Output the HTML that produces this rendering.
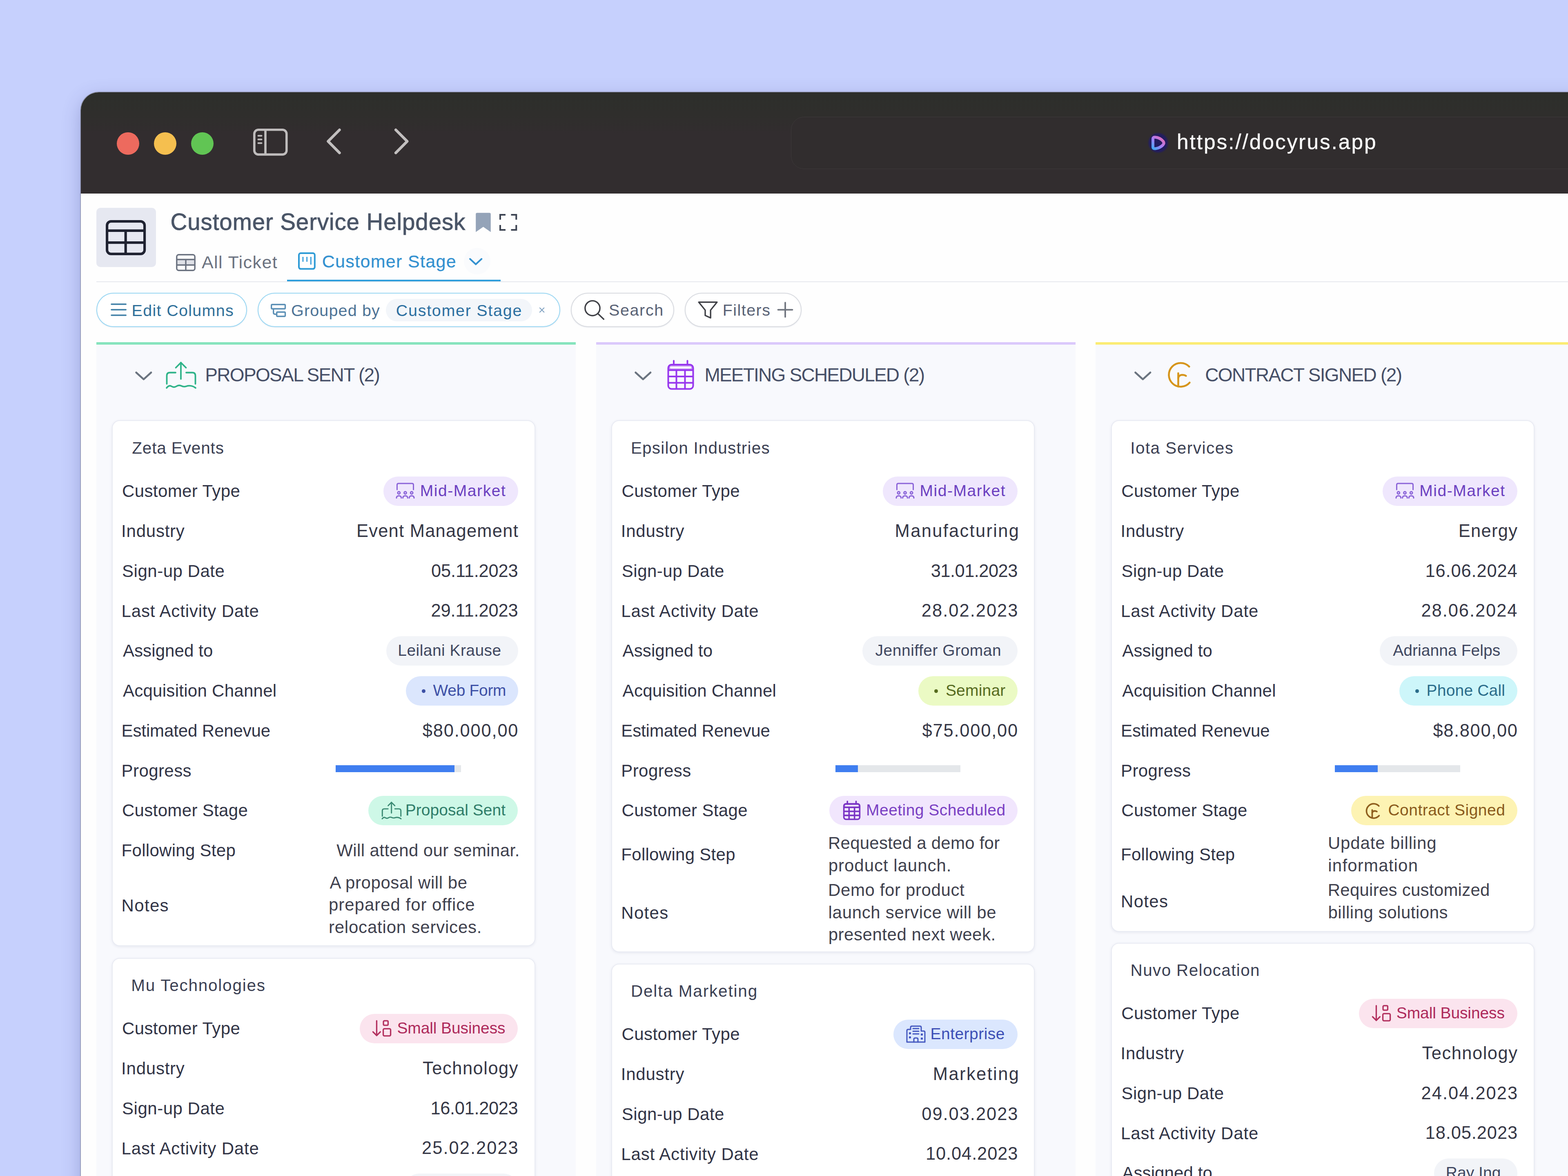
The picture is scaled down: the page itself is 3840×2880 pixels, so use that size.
<!DOCTYPE html>
<html lang="en"><head><meta charset="utf-8"><title>Customer Service Helpdesk</title>
<style>
html,body{margin:0;padding:0}
body{width:3840px;height:2880px;overflow:hidden;position:relative;background:#c6d0fd;font-family:"Liberation Sans", sans-serif}
#win{position:absolute;left:197.5px;top:226.3px;width:3800px;height:2800px;border-radius:44px 0 0 0;overflow:hidden;background:#fefefe;box-shadow:0 0 0 1.5px rgba(125,128,148,.7),0 14px 46px 0 rgba(60,64,140,.30)}
#pg{position:absolute;left:-197.5px;top:-226.3px;width:3840px;height:2880px}
#pg>div,#pg>svg,#pg>span{position:absolute}
#pg>span{white-space:pre;line-height:1;display:block}
</style></head><body><div id="win"><div id="pg">
<div style="left:197.5px;top:226.3px;width:3700px;height:247.7px;background:linear-gradient(180deg,#2d2f2b 0%,#2f2e2c 22%,#322d2f 42%,#322d2f 100%)"></div>
<div style="left:286.1px;top:323.5px;width:55.0px;height:55.0px;border-radius:50%;background:#ed6a5e"></div>
<div style="left:377.3px;top:323.5px;width:55.0px;height:55.0px;border-radius:50%;background:#f5bf4f"></div>
<div style="left:467.8px;top:323.5px;width:55.0px;height:55.0px;border-radius:50%;background:#61c554"></div>
<svg style="left:613.8px;top:308.9px" width="96.6" height="78.2" viewBox="613.8 308.9 96.6 78.2" fill="none"><g stroke="#bfbcbc" stroke-linecap="round"><rect x="622.6" y="317.7" width="79" height="60.6" rx="10" stroke-width="5.6"/><path d="M649.8 318 V378" stroke-width="5.6"/><path d="M632.3 332.3 H640.3 M632.3 341.4 H640.3 M632.3 350.5 H640.3" stroke-width="4"/></g></svg>
<svg style="left:793.0px;top:308.0px" width="49.0" height="76.0" viewBox="793.0 308.0 49.0 76.0" fill="none"><path d="M831.5 318 L803.5 346.1 L831.5 374.3" stroke="#c2bfbf" stroke-width="6.6" stroke-linecap="round" stroke-linejoin="round"/></svg>
<svg style="left:958.0px;top:308.0px" width="50.0" height="76.0" viewBox="958.0 308.0 50.0 76.0" fill="none"><path d="M969.2 318 L997.2 346.1 L969.2 374.3" stroke="#c2bfbf" stroke-width="6.6" stroke-linecap="round" stroke-linejoin="round"/></svg>
<div style="left:1937.0px;top:285.5px;width:2100.0px;height:128.0px;border-radius:32px;border:1.5px solid #3d393a;background:#312d2e;box-sizing:border-box"></div>
<svg style="left:2806px;top:320px" width="60" height="60" viewBox="2806 320 60 60" fill="none"><defs><linearGradient id="fg" x1="2852" y1="332" x2="2820" y2="368" gradientUnits="userSpaceOnUse"><stop offset="0" stop-color="#ff6a96"/><stop offset="0.5" stop-color="#a97cf5"/><stop offset="1" stop-color="#25b4f2"/></linearGradient><radialGradient id="fh" cx="2836.5" cy="349.8" r="26.5" gradientUnits="userSpaceOnUse"><stop offset="0" stop-color="#221c60"/><stop offset="0.78" stop-color="#221c60"/><stop offset="1" stop-color="#221c60" stop-opacity="0"/></radialGradient></defs><circle cx="2836.5" cy="349.8" r="26.5" fill="url(#fh)"/><path d="M2823.5 340 Q2823.5 335.5 2829 336 Q2841 337 2848.5 346 Q2852 350.5 2848 355 Q2841 362.5 2829.5 364 Q2823.5 364.5 2823.5 359.5 Z" stroke="url(#fg)" stroke-width="7" stroke-linejoin="round"/></svg>
<div style="left:235.7px;top:509.0px;width:146.3px;height:145.4px;border-radius:10px;background:#e6e8f1"></div>
<svg style="left:253.3px;top:532.8px" width="110.2" height="98.0" viewBox="253.3 532.8 110.2 98.0" fill="none"><g stroke="#1f2231" stroke-width="6.2" stroke-linejoin="round"><rect x="262.4" y="541.9" width="92" height="79.8" rx="10"/><path d="M262.4 564.6 H354.4 M262.4 594 H354.4 M308 564.6 V621.5"/></g></svg>
<svg style="left:1163.0px;top:519.0px" width="41.0" height="51.5" viewBox="1163.0 519.0 41.0 51.5" fill="none"><path d="M1165.2 524.5 Q1165.2 521.2 1168.5 521.2 H1198.5 Q1201.8 521.2 1201.8 524.5 V568.3 L1183.5 555.5 L1165.2 568.3 Z" fill="#94a3b8"/></svg>
<svg style="left:1220.0px;top:521.0px" width="49.3" height="47.0" viewBox="1220.0 521.0 49.3 47.0" fill="none"><g stroke="#3f4654" stroke-width="4" stroke-linecap="square" stroke-linejoin="miter"><path d="M1225 536 V526 H1236"/><path d="M1253.5 526 H1264.3 V536"/><path d="M1225 553 V563 H1236"/><path d="M1253.5 563 H1264.3 V553"/></g></svg>
<svg style="left:428.0px;top:618.5px" width="54.0" height="48.1" viewBox="428.0 618.5 54.0 48.1" fill="none"><g stroke="#6b7280" stroke-width="3.4" stroke-linejoin="round"><rect x="433" y="636" width="44" height="12" fill="#dfe1e7" stroke="none"/><rect x="432.8" y="623.3" width="44.4" height="38.5" rx="5"/><path d="M432.8 635 H477.2 M432.8 648.5 H477.2 M455 635 V661.5"/></g></svg>
<svg style="left:727.4px;top:615.0px" width="48.8" height="48.7" viewBox="727.4 615.0 48.8 48.7" fill="none"><g stroke="#2e9bd6" stroke-linejoin="round" stroke-linecap="butt"><rect x="732.4" y="620" width="38.8" height="38.6" rx="4.5" stroke-width="4"/><path d="M742.3 629 V641 M752 629 V641 M761.7 629 V648" stroke-width="3.4" stroke="#4fa9df"/></g></svg>
<div style="left:1136.0px;top:607.0px;width:65.0px;height:65.0px;border-radius:50%;background:#fafbfd"></div>
<svg style="left:1143.0px;top:625.5px" width="44.4" height="29.1" viewBox="1143.0 625.5 44.4 29.1" fill="none"><path d="M1151 633.5 L1165.2 646.8 L1179.4 633.5" stroke="#3391d0" stroke-width="4" stroke-linecap="round" stroke-linejoin="round"/></svg>
<div style="left:236.0px;top:689.0px;width:3650.0px;height:2.2px;background:#e6e8ee"></div>
<div style="left:703.3px;top:685.0px;width:523.0px;height:4.2px;background:#2f9edb"></div>
<div style="left:235.7px;top:717.0px;width:369.3px;height:84.0px;border-radius:42px;border:2.6px solid #9ad7f3;background:#fff;box-sizing:border-box;box-shadow:0 1px 3px rgba(120,140,170,.18)"></div>
<svg style="left:265.5px;top:737.0px" width="49.2" height="43.0" viewBox="265.5 737.0 49.2 43.0" fill="none"><path d="M272.5 745 H307.7 M272.5 758.5 H307.7 M272.5 772 H307.7" stroke="#3f7fa6" stroke-width="3.6" stroke-linecap="round"/></svg>
<div style="left:630.7px;top:717.0px;width:741.3px;height:84.0px;border-radius:42px;border:2.6px solid #9ad7f3;background:#fff;box-sizing:border-box;box-shadow:0 1px 3px rgba(120,140,170,.18)"></div>
<svg style="left:657.3px;top:737.5px" width="49.2" height="44.5" viewBox="657.3 737.5 49.2 44.5" fill="none"><g stroke="#5b8fb5" stroke-width="3.4" stroke-linejoin="round" stroke-linecap="round"><rect x="665" y="745.2" width="33.8" height="10.5" rx="2"/><rect x="678" y="763.8" width="20.8" height="10.5" rx="2"/><path d="M670 756 V765 Q670 769 674 769 H678"/></g></svg>
<div style="left:945.4px;top:731.6px;width:358.0px;height:55.4px;border-radius:28px;background:#f3f6fa"></div>
<svg style="left:1316.7px;top:748.5px" width="20.3" height="20.5" viewBox="1316.7 748.5 20.3 20.5" fill="none"><path d="M1321.7 753.6 L1332 763.9 M1332 753.6 L1321.7 763.9" stroke="#7fa1c1" stroke-width="2.1" stroke-linecap="round"/></svg>
<div style="left:1398.2px;top:717.0px;width:253.1px;height:84.0px;border-radius:42px;border:2.6px solid #d9dbe0;background:#fff;box-sizing:border-box;box-shadow:0 1px 3px rgba(120,140,170,.18)"></div>
<svg style="left:1425.0px;top:728.8px" width="61.0" height="60.2" viewBox="1425.0 728.8 61.0 60.2" fill="none"><g stroke="#3f4046" stroke-width="3.4" stroke-linecap="round"><circle cx="1451" cy="754.6" r="18.2"/><path d="M1464.5 768 L1478.5 781.5"/></g></svg>
<div style="left:1676.5px;top:717.0px;width:286.5px;height:84.0px;border-radius:42px;border:2.6px solid #d9dbe0;background:#fff;box-sizing:border-box;box-shadow:0 1px 3px rgba(120,140,170,.18)"></div>
<svg style="left:1703.3px;top:732.0px" width="61.1" height="54.5" viewBox="1703.3 732.0 61.1 54.5" fill="none"><path d="M1711.5 740 H1756.3 L1740.5 759.5 V778.5 L1727.3 772.5 V759.5 Z" stroke="#3f4046" stroke-width="3.4" stroke-linejoin="round"/></svg>
<svg style="left:1898.0px;top:734.4px" width="50.0" height="49.0" viewBox="1898.0 734.4 50.0 49.0" fill="none"><path d="M1923 741.5 V776.5 M1905.5 759 H1940.5" stroke="#70757f" stroke-width="3.8" stroke-linecap="round"/></svg>
<div style="left:236.0px;top:838.0px;width:1174.0px;height:2100.0px;background:#f8f9fd"></div>
<div style="left:236.0px;top:838.0px;width:1174.0px;height:6.4px;background:#86e4bd"></div>
<svg style="left:325.0px;top:903.7px" width="53.6" height="33.3" viewBox="325.0 903.7 53.6 33.3" fill="none"><path d="M333.5 912 L351.8 928.6 L370.1 912" stroke="#6b7480" stroke-width="4.6" stroke-linecap="round" stroke-linejoin="round"/></svg>
<svg style="left:404.5px;top:884.5px;overflow:visible" width="77.0" height="69.0" viewBox="0 0 77 69" fill="none"><g stroke="#2fb389" stroke-width="3.8" stroke-linecap="round" stroke-linejoin="round"><path d="M38 3 V43"/><path d="M25.5 15.5 L38 3 L50.5 15.5"/><path d="M25 27.5 H11 Q3.5 27.5 3.5 35 V55"/><path d="M51 27.5 H66 Q73.5 27.5 73.5 35 V55"/><path d="M3 65 Q9 57 15 61 T27 61 T39 60 T51 61 T63 60 T74 65" /></g></svg>
<div style="left:273.5px;top:1029.0px;width:1037.0px;height:1288.1px;border-radius:19px;background:#fff;border:2px solid #e9ebf3;box-sizing:border-box;box-shadow:0 2px 6px rgba(90,100,140,.11)"></div>
<div style="left:822.0px;top:1873.6px;width:306.6px;height:17.0px;background:#e4e7ea"></div>
<div style="left:822.0px;top:1873.6px;width:291.3px;height:17.0px;background:#3f7ef0"></div>
<div style="left:273.5px;top:2346.0px;width:1037.0px;height:1355.5px;border-radius:19px;background:#fff;border:2px solid #e9ebf3;box-sizing:border-box;box-shadow:0 2px 6px rgba(90,100,140,.11)"></div>
<div style="left:1459.7px;top:838.0px;width:1174.0px;height:2100.0px;background:#f8f9fd"></div>
<div style="left:1459.7px;top:838.0px;width:1174.0px;height:6.4px;background:#dbc9fb"></div>
<svg style="left:1548.0px;top:903.7px" width="53.6" height="33.3" viewBox="1548.0 903.7 53.6 33.3" fill="none"><path d="M1556.5 912 L1574.8 928.6 L1593.1 912" stroke="#6b7480" stroke-width="4.6" stroke-linecap="round" stroke-linejoin="round"/></svg>
<svg style="left:1633.7px;top:880.6px;overflow:visible" width="66.0" height="74.0" viewBox="0 0 66 74" fill="none"><g stroke="#9737ee" stroke-width="4.0" stroke-linecap="round" stroke-linejoin="round"><rect x="2.5" y="12" width="61" height="59.5" rx="8"/><path d="M16 2.5 V12 M49.5 2.5 V12"/><path d="M3 25.5 H63 M3 41 H63 M3 56.5 H63"/><path d="M22.5 26 V71 M43.5 26 V71"/></g><rect x="2.5" y="12" width="61" height="13.5" rx="6" fill="#9737ee" opacity="0.55"/><rect x="7" y="16.5" width="52" height="5" rx="2" fill="#fff" opacity="0.9"/></svg>
<div style="left:1497.2px;top:1029.0px;width:1037.0px;height:1303.1px;border-radius:19px;background:#fff;border:2px solid #e9ebf3;box-sizing:border-box;box-shadow:0 2px 6px rgba(90,100,140,.11)"></div>
<div style="left:2045.7px;top:1873.6px;width:306.6px;height:17.0px;background:#e4e7ea"></div>
<div style="left:2045.7px;top:1873.6px;width:55.2px;height:17.0px;background:#3f7ef0"></div>
<div style="left:1497.2px;top:2360.0px;width:1037.0px;height:1341.5px;border-radius:19px;background:#fff;border:2px solid #e9ebf3;box-sizing:border-box;box-shadow:0 2px 6px rgba(90,100,140,.11)"></div>
<div style="left:2683.4px;top:838.0px;width:1174.0px;height:2100.0px;background:#f8f9fd"></div>
<div style="left:2683.4px;top:838.0px;width:1174.0px;height:6.4px;background:#fbec74"></div>
<svg style="left:2772.0px;top:903.7px" width="53.6" height="33.3" viewBox="2772.0 903.7 53.6 33.3" fill="none"><path d="M2780.5 912 L2798.8 928.6 L2817.1 912" stroke="#6b7480" stroke-width="4.6" stroke-linecap="round" stroke-linejoin="round"/></svg>
<svg style="left:2860.0px;top:884.9px;overflow:visible" width="62.0" height="66.0" viewBox="0 0 62 66" fill="none"><g stroke="#d6951b" stroke-width="4.6" stroke-linecap="round" stroke-linejoin="round"><path d="M52.4 12.9 A29.0 29.0 0 1 0 53.4 52.0"/><path d="M25.5 29 V61.5"/><path d="M25.5 41 Q27 33.5 35 33 Q41 33 44.5 35.5"/></g></svg>
<div style="left:2720.9px;top:1029.0px;width:1037.0px;height:1253.0px;border-radius:19px;background:#fff;border:2px solid #e9ebf3;box-sizing:border-box;box-shadow:0 2px 6px rgba(90,100,140,.11)"></div>
<div style="left:3269.4px;top:1873.6px;width:306.6px;height:17.0px;background:#e4e7ea"></div>
<div style="left:3269.4px;top:1873.6px;width:104.2px;height:17.0px;background:#3f7ef0"></div>
<div style="left:2720.9px;top:2309.0px;width:1037.0px;height:1392.5px;border-radius:19px;background:#fff;border:2px solid #e9ebf3;box-sizing:border-box;box-shadow:0 2px 6px rgba(90,100,140,.11)"></div>
<span id="t0" style="left:2881.9px;top:322.2px;font-size:51.5px;color:#fbfbfb;letter-spacing:2.922px;-webkit-text-stroke:0.4px #fbfbfb;">https://docyrus.app</span>
<span id="t1" style="left:417.6px;top:516.0px;font-size:56.5px;color:#4a5567;letter-spacing:0.897px;-webkit-text-stroke:0.9px #4a5567;">Customer Service Helpdesk</span>
<span id="t2" style="left:493.9px;top:620.9px;font-size:43px;color:#6b7280;letter-spacing:1.417px;">All Ticket</span>
<span id="t3" style="left:788.7px;top:618.7px;font-size:43px;color:#3391d0;letter-spacing:1.338px;-webkit-text-stroke:0.3px #3391d0;">Customer Stage</span>
<span id="t4" style="left:322.6px;top:740.6px;font-size:39.5px;color:#2f6f99;letter-spacing:1.306px;">Edit Columns</span>
<span id="t5" style="left:713.0px;top:740.6px;font-size:39.5px;color:#4d7396;letter-spacing:1.160px;">Grouped by</span>
<span id="t6" style="left:969.8px;top:740.6px;font-size:39.5px;color:#2c6fa0;letter-spacing:1.703px;">Customer Stage</span>
<span id="t7" style="left:1490.9px;top:739.8px;font-size:39.5px;color:#596275;letter-spacing:1.641px;">Search</span>
<span id="t8" style="left:1769.8px;top:739.8px;font-size:39.5px;color:#596275;letter-spacing:1.439px;">Filters</span>
<span id="t9" style="left:502.2px;top:895.1px;font-size:46px;color:#464f67;letter-spacing:-1.649px;">PROPOSAL SENT (2)</span>
<span id="t10" style="left:323.2px;top:1076.7px;font-size:40.5px;color:#3b4053;letter-spacing:0.864px;">Zeta Events</span>
<span id="t11" style="left:298.9px;top:1182.4px;font-size:42px;color:#313446;letter-spacing:0.415px;">Customer Type</span>
<div style="left:938.5px;top:1167.2px;width:330.0px;height:72px;border-radius:36px;background:#efe7fd"></div>
<svg style="left:970.1px;top:1181.8px;overflow:visible" width="45.0" height="39.2" viewBox="0 0 46 40" fill="none"><g stroke="#8a63d8" stroke-width="3.0" stroke-linecap="round" stroke-linejoin="round"><path d="M2.5 17.5 V5.5 Q2.5 2 6 2 H40 Q43.5 2 43.5 5.5 V17.5"/><circle cx="7" cy="25.5" r="3"/><circle cx="23" cy="25.5" r="3"/><circle cx="39" cy="25.5" r="3"/><path d="M1 38.5 Q1 33 7 33 Q13 33 13 38.5"/><path d="M17 38.5 Q17 33 23 33 Q29 33 29 38.5"/><path d="M33 38.5 Q33 33 39 33 Q45 33 45 38.5"/></g></svg>
<span id="t12" style="left:1028.8px;top:1182.2px;font-size:39px;color:#6b3fc0;letter-spacing:1.550px;">Mid-Market</span>
<span id="t13" style="left:297.1px;top:1280.2px;font-size:42px;color:#313446;letter-spacing:0.765px;">Industry</span>
<span id="t14" style="left:872.9px;top:1278.9px;font-size:43.5px;color:#353746;letter-spacing:1.244px;">Event Management</span>
<span id="t15" style="left:299.1px;top:1377.9px;font-size:42px;color:#313446;letter-spacing:0.502px;">Sign-up Date</span>
<span id="t16" style="left:1056.0px;top:1376.7px;font-size:43.5px;color:#353746;letter-spacing:-0.186px;">05.11.2023</span>
<span id="t17" style="left:297.6px;top:1475.7px;font-size:42px;color:#313446;letter-spacing:0.834px;">Last Activity Date</span>
<span id="t18" style="left:1055.5px;top:1474.4px;font-size:43.5px;color:#353746;letter-spacing:-0.132px;">29.11.2023</span>
<span id="t19" style="left:300.9px;top:1573.4px;font-size:42px;color:#313446;letter-spacing:0.106px;">Assigned to</span>
<div style="left:945.5px;top:1558.2px;width:323.0px;height:72px;border-radius:36px;background:#f2f4f8"></div>
<span id="t20" style="left:974.3px;top:1573.2px;font-size:39px;color:#3f4760;letter-spacing:0.443px;">Leilani Krause</span>
<span id="t21" style="left:300.9px;top:1671.2px;font-size:42px;color:#313446;letter-spacing:0.281px;">Acquisition Channel</span>
<div style="left:994.0px;top:1656.0px;width:274.5px;height:72px;border-radius:36px;background:#dbe6fd"></div>
<div style="left:1032.5px;top:1687.5px;width:9.6px;height:9.6px;border-radius:50%;background:#3d50a6"></div>
<span id="t22" style="left:1060.5px;top:1670.9px;font-size:39px;color:#3d50a6;letter-spacing:-0.324px;">Web Form</span>
<span id="t23" style="left:297.6px;top:1768.9px;font-size:42px;color:#313446;letter-spacing:-0.121px;">Estimated Renevue</span>
<span id="t24" style="left:1034.8px;top:1767.7px;font-size:43.5px;color:#353746;letter-spacing:1.783px;">$80.000,00</span>
<span id="t25" style="left:297.6px;top:1866.7px;font-size:42px;color:#313446;letter-spacing:0.414px;">Progress</span>
<span id="t26" style="left:298.9px;top:1964.4px;font-size:42px;color:#313446;letter-spacing:0.347px;">Customer Stage</span>
<div style="left:902.4px;top:1949.2px;width:366.1px;height:72px;border-radius:36px;background:#cef8e7"></div>
<svg style="left:933.8px;top:1962.8px;overflow:visible" width="50.0" height="44.8" viewBox="0 0 77 69" fill="none"><g stroke="#3b8a73" stroke-width="4.5" stroke-linecap="round" stroke-linejoin="round"><path d="M38 3 V43"/><path d="M25.5 15.5 L38 3 L50.5 15.5"/><path d="M25 27.5 H11 Q3.5 27.5 3.5 35 V55"/><path d="M51 27.5 H66 Q73.5 27.5 73.5 35 V55"/><path d="M3 65 Q9 57 15 61 T27 61 T39 60 T51 61 T63 60 T74 65" /></g></svg>
<span id="t27" style="left:992.7px;top:1964.2px;font-size:39px;color:#2f7d69;letter-spacing:0.040px;">Proposal Sent</span>
<span id="t28" style="left:297.6px;top:2062.4px;font-size:42px;color:#313446;letter-spacing:0.287px;">Following Step</span>
<span id="t29" style="left:824.3px;top:2062.1px;font-size:42px;color:#3f414e;letter-spacing:0.398px;">Will attend our seminar.</span>
<span id="t30" style="left:297.6px;top:2196.5px;font-size:42px;color:#313446;letter-spacing:1.311px;">Notes</span>
<span id="t31" style="left:807.6px;top:2140.5px;font-size:42px;color:#3f414e;letter-spacing:0.570px;">A proposal will be</span>
<span id="t32" style="left:805.0px;top:2195.2px;font-size:42px;color:#3f414e;letter-spacing:0.970px;">prepared for office</span>
<span id="t33" style="left:804.9px;top:2249.9px;font-size:42px;color:#3f414e;letter-spacing:0.797px;">relocation services.</span>
<span id="t34" style="left:321.2px;top:2392.5px;font-size:40.5px;color:#3b4053;letter-spacing:1.756px;">Mu Technologies</span>
<span id="t35" style="left:298.9px;top:2498.2px;font-size:42px;color:#313446;letter-spacing:0.415px;">Customer Type</span>
<div style="left:880.7px;top:2483.0px;width:387.8px;height:72px;border-radius:36px;background:#fbe4ee"></div>
<svg style="left:912.3px;top:2498.4px;overflow:visible" width="46.5" height="39.9" viewBox="0 0 49 42" fill="none"><g stroke="#b3315f" stroke-width="3.5" stroke-linecap="round" stroke-linejoin="round"><path d="M11 2 V40 M1.5 30.5 L11 40 L20.5 30.5"/><rect x="28.5" y="2" width="12" height="11.5" rx="2.5"/><rect x="28" y="22.5" width="19" height="18.5" rx="3"/></g></svg>
<span id="t36" style="left:972.4px;top:2498.0px;font-size:39px;color:#ae2a5b;letter-spacing:-0.110px;">Small Business</span>
<span id="t37" style="left:297.1px;top:2596.0px;font-size:42px;color:#313446;letter-spacing:0.765px;">Industry</span>
<span id="t38" style="left:1035.1px;top:2594.7px;font-size:43.5px;color:#353746;letter-spacing:1.487px;">Technology</span>
<span id="t39" style="left:299.1px;top:2693.7px;font-size:42px;color:#313446;letter-spacing:0.502px;">Sign-up Date</span>
<span id="t40" style="left:1054.4px;top:2692.5px;font-size:43.5px;color:#353746;letter-spacing:-0.366px;">16.01.2023</span>
<span id="t41" style="left:297.6px;top:2791.5px;font-size:42px;color:#313446;letter-spacing:0.834px;">Last Activity Date</span>
<span id="t42" style="left:1033.1px;top:2790.2px;font-size:43.5px;color:#353746;letter-spacing:1.998px;">25.02.2023</span>
<span id="t43" style="left:300.9px;top:2889.2px;font-size:42px;color:#313446;letter-spacing:0.106px;">Assigned to</span>
<div style="left:990.5px;top:2874.0px;width:278.0px;height:72px;border-radius:36px;background:#f2f4f8"></div>
<span id="t44" style="left:1020.5px;top:2889.0px;font-size:39px;color:#3f4760;letter-spacing:-0.247px;">Corey Bator</span>
<span id="t45" style="left:1725.4px;top:895.1px;font-size:46px;color:#464f67;letter-spacing:-1.773px;">MEETING SCHEDULED (2)</span>
<span id="t46" style="left:1544.9px;top:1076.7px;font-size:40.5px;color:#3b4053;letter-spacing:1.183px;">Epsilon Industries</span>
<span id="t47" style="left:1522.6px;top:1182.4px;font-size:42px;color:#313446;letter-spacing:0.415px;">Customer Type</span>
<div style="left:2162.2px;top:1167.2px;width:330.0px;height:72px;border-radius:36px;background:#efe7fd"></div>
<svg style="left:2193.8px;top:1181.8px;overflow:visible" width="45.0" height="39.2" viewBox="0 0 46 40" fill="none"><g stroke="#8a63d8" stroke-width="3.0" stroke-linecap="round" stroke-linejoin="round"><path d="M2.5 17.5 V5.5 Q2.5 2 6 2 H40 Q43.5 2 43.5 5.5 V17.5"/><circle cx="7" cy="25.5" r="3"/><circle cx="23" cy="25.5" r="3"/><circle cx="39" cy="25.5" r="3"/><path d="M1 38.5 Q1 33 7 33 Q13 33 13 38.5"/><path d="M17 38.5 Q17 33 23 33 Q29 33 29 38.5"/><path d="M33 38.5 Q33 33 39 33 Q45 33 45 38.5"/></g></svg>
<span id="t48" style="left:2252.5px;top:1182.2px;font-size:39px;color:#6b3fc0;letter-spacing:1.550px;">Mid-Market</span>
<span id="t49" style="left:1520.8px;top:1280.2px;font-size:42px;color:#313446;letter-spacing:0.765px;">Industry</span>
<span id="t50" style="left:2191.6px;top:1278.9px;font-size:43.5px;color:#353746;letter-spacing:2.310px;">Manufacturing</span>
<span id="t51" style="left:1522.8px;top:1377.9px;font-size:42px;color:#313446;letter-spacing:0.502px;">Sign-up Date</span>
<span id="t52" style="left:2279.7px;top:1376.7px;font-size:43.5px;color:#353746;letter-spacing:-0.550px;">31.01.2023</span>
<span id="t53" style="left:1521.3px;top:1475.7px;font-size:42px;color:#313446;letter-spacing:0.834px;">Last Activity Date</span>
<span id="t54" style="left:2256.8px;top:1474.4px;font-size:43.5px;color:#353746;letter-spacing:1.998px;">28.02.2023</span>
<span id="t55" style="left:1524.6px;top:1573.4px;font-size:42px;color:#313446;letter-spacing:0.106px;">Assigned to</span>
<div style="left:2112.2px;top:1558.2px;width:380.0px;height:72px;border-radius:36px;background:#f2f4f8"></div>
<span id="t56" style="left:2143.6px;top:1573.2px;font-size:39px;color:#3f4760;letter-spacing:0.503px;">Jenniffer Groman</span>
<span id="t57" style="left:1524.6px;top:1671.2px;font-size:42px;color:#313446;letter-spacing:0.281px;">Acquisition Channel</span>
<div style="left:2249.2px;top:1656.0px;width:243.0px;height:72px;border-radius:36px;background:#ebfac4"></div>
<div style="left:2287.7px;top:1687.5px;width:9.6px;height:9.6px;border-radius:50%;background:#566b1f"></div>
<span id="t58" style="left:2315.9px;top:1670.9px;font-size:39px;color:#566b1f;letter-spacing:0.197px;">Seminar</span>
<span id="t59" style="left:1521.3px;top:1768.9px;font-size:42px;color:#313446;letter-spacing:-0.121px;">Estimated Renevue</span>
<span id="t60" style="left:2258.5px;top:1767.7px;font-size:43.5px;color:#353746;letter-spacing:1.783px;">$75.000,00</span>
<span id="t61" style="left:1521.3px;top:1866.7px;font-size:42px;color:#313446;letter-spacing:0.414px;">Progress</span>
<span id="t62" style="left:1522.6px;top:1964.4px;font-size:42px;color:#313446;letter-spacing:0.347px;">Customer Stage</span>
<div style="left:2030.8px;top:1949.2px;width:461.4px;height:72px;border-radius:36px;background:#f1e6fd"></div>
<svg style="left:2064.8px;top:1960.6px;overflow:visible" width="42.0" height="47.0" viewBox="0 0 66 74" fill="none"><g stroke="#7a33c4" stroke-width="5.6" stroke-linecap="round" stroke-linejoin="round"><rect x="2.5" y="12" width="61" height="59.5" rx="8"/><path d="M16 2.5 V12 M49.5 2.5 V12"/><path d="M3 25.5 H63 M3 41 H63 M3 56.5 H63"/><path d="M22.5 26 V71 M43.5 26 V71"/></g><rect x="2.5" y="12" width="61" height="13.5" rx="6" fill="#7a33c4" opacity="0.55"/><rect x="7" y="16.5" width="52" height="5" rx="2" fill="#fff" opacity="0.9"/></svg>
<span id="t63" style="left:2121.1px;top:1964.2px;font-size:39px;color:#7a40c3;letter-spacing:0.450px;">Meeting Scheduled</span>
<span id="t64" style="left:1521.3px;top:2071.9px;font-size:42px;color:#313446;letter-spacing:0.287px;">Following Step</span>
<span id="t65" style="left:2028.0px;top:2043.8px;font-size:42px;color:#3f414e;letter-spacing:0.239px;">Requested a demo for</span>
<span id="t66" style="left:2028.7px;top:2098.5px;font-size:42px;color:#3f414e;letter-spacing:0.974px;">product launch.</span>
<span id="t67" style="left:1521.3px;top:2214.8px;font-size:42px;color:#313446;letter-spacing:1.311px;">Notes</span>
<span id="t68" style="left:2028.0px;top:2158.8px;font-size:42px;color:#3f414e;letter-spacing:0.618px;">Demo for product</span>
<span id="t69" style="left:2028.6px;top:2213.5px;font-size:42px;color:#3f414e;letter-spacing:0.673px;">launch service will be</span>
<span id="t70" style="left:2028.7px;top:2268.2px;font-size:42px;color:#3f414e;letter-spacing:0.542px;">presented next week.</span>
<span id="t71" style="left:1544.9px;top:2406.5px;font-size:40.5px;color:#3b4053;letter-spacing:1.836px;">Delta Marketing</span>
<span id="t72" style="left:1522.6px;top:2512.2px;font-size:42px;color:#313446;letter-spacing:0.415px;">Customer Type</span>
<div style="left:2188.2px;top:2497.0px;width:304.0px;height:72px;border-radius:36px;background:#dbe7fe"></div>
<svg style="left:2219.0px;top:2511.2px;overflow:visible" width="48.0" height="43.0" viewBox="0 0 48 43" fill="none"><g stroke="#4458c0" stroke-width="3.0" stroke-linecap="round" stroke-linejoin="round"><path d="M2 41 V13 Q2 10 5 10 H11 V5 Q11 2 14 2 H34 Q37 2 37 5 V14 H43 Q46 14 46 17 V41 Z"/><path d="M17 8 H31 M17 14.5 H31 M17 21 H31"/><path d="M19 41 V34 Q19 31 22 31 H26 Q29 31 29 34 V41"/></g><g fill="#4458c0"><rect x="7" y="17" width="5" height="5" rx="1"/><rect x="7" y="27" width="5" height="5" rx="1"/><rect x="36" y="20" width="5" height="5" rx="1"/><rect x="36" y="30" width="5" height="5" rx="1"/></g></svg>
<span id="t73" style="left:2278.5px;top:2512.0px;font-size:39px;color:#3d4fb6;letter-spacing:0.465px;">Enterprise</span>
<span id="t74" style="left:1520.8px;top:2610.0px;font-size:42px;color:#313446;letter-spacing:0.765px;">Industry</span>
<span id="t75" style="left:2284.8px;top:2608.7px;font-size:43.5px;color:#353746;letter-spacing:2.397px;">Marketing</span>
<span id="t76" style="left:1522.8px;top:2707.7px;font-size:42px;color:#313446;letter-spacing:0.502px;">Sign-up Date</span>
<span id="t77" style="left:2257.3px;top:2706.5px;font-size:43.5px;color:#353746;letter-spacing:1.944px;">09.03.2023</span>
<span id="t78" style="left:1521.3px;top:2805.5px;font-size:42px;color:#313446;letter-spacing:0.834px;">Last Activity Date</span>
<span id="t79" style="left:2266.9px;top:2804.2px;font-size:43.5px;color:#353746;letter-spacing:0.878px;">10.04.2023</span>
<span id="t80" style="left:1524.6px;top:2903.2px;font-size:42px;color:#313446;letter-spacing:0.106px;">Assigned to</span>
<div style="left:2146.2px;top:2888.0px;width:346.0px;height:72px;border-radius:36px;background:#f2f4f8"></div>
<span id="t81" style="left:2175.0px;top:2903.0px;font-size:39px;color:#3f4760;">Kadin Workman</span>
<span id="t82" style="left:2951.3px;top:895.1px;font-size:46px;color:#464f67;letter-spacing:-1.676px;">CONTRACT SIGNED (2)</span>
<span id="t83" style="left:2768.2px;top:1076.7px;font-size:40.5px;color:#3b4053;letter-spacing:1.466px;">Iota Services</span>
<span id="t84" style="left:2746.3px;top:1182.4px;font-size:42px;color:#313446;letter-spacing:0.415px;">Customer Type</span>
<div style="left:3385.9px;top:1167.2px;width:330.0px;height:72px;border-radius:36px;background:#efe7fd"></div>
<svg style="left:3417.5px;top:1181.8px;overflow:visible" width="45.0" height="39.2" viewBox="0 0 46 40" fill="none"><g stroke="#8a63d8" stroke-width="3.0" stroke-linecap="round" stroke-linejoin="round"><path d="M2.5 17.5 V5.5 Q2.5 2 6 2 H40 Q43.5 2 43.5 5.5 V17.5"/><circle cx="7" cy="25.5" r="3"/><circle cx="23" cy="25.5" r="3"/><circle cx="39" cy="25.5" r="3"/><path d="M1 38.5 Q1 33 7 33 Q13 33 13 38.5"/><path d="M17 38.5 Q17 33 23 33 Q29 33 29 38.5"/><path d="M33 38.5 Q33 33 39 33 Q45 33 45 38.5"/></g></svg>
<span id="t85" style="left:3476.2px;top:1182.2px;font-size:39px;color:#6b3fc0;letter-spacing:1.550px;">Mid-Market</span>
<span id="t86" style="left:2744.5px;top:1280.2px;font-size:42px;color:#313446;letter-spacing:0.765px;">Industry</span>
<span id="t87" style="left:3571.7px;top:1278.9px;font-size:43.5px;color:#353746;letter-spacing:1.285px;">Energy</span>
<span id="t88" style="left:2746.5px;top:1377.9px;font-size:42px;color:#313446;letter-spacing:0.502px;">Sign-up Date</span>
<span id="t89" style="left:3490.6px;top:1376.7px;font-size:43.5px;color:#353746;letter-spacing:0.808px;">16.06.2024</span>
<span id="t90" style="left:2745.0px;top:1475.7px;font-size:42px;color:#313446;letter-spacing:0.834px;">Last Activity Date</span>
<span id="t91" style="left:3480.5px;top:1474.4px;font-size:43.5px;color:#353746;letter-spacing:1.927px;">28.06.2024</span>
<span id="t92" style="left:2748.3px;top:1573.4px;font-size:42px;color:#313446;letter-spacing:0.106px;">Assigned to</span>
<div style="left:3379.3px;top:1558.2px;width:336.6px;height:72px;border-radius:36px;background:#f2f4f8"></div>
<span id="t93" style="left:3411.2px;top:1573.2px;font-size:39px;color:#3f4760;letter-spacing:0.058px;">Adrianna Felps</span>
<span id="t94" style="left:2748.3px;top:1671.2px;font-size:42px;color:#313446;letter-spacing:0.281px;">Acquisition Channel</span>
<div style="left:3427.4px;top:1656.0px;width:288.5px;height:72px;border-radius:36px;background:#cdf6fa"></div>
<div style="left:3465.9px;top:1687.5px;width:9.6px;height:9.6px;border-radius:50%;background:#2b6d8b"></div>
<span id="t95" style="left:3493.6px;top:1670.9px;font-size:39px;color:#2b6d8b;letter-spacing:0.179px;">Phone Call</span>
<span id="t96" style="left:2745.0px;top:1768.9px;font-size:42px;color:#313446;letter-spacing:-0.121px;">Estimated Renevue</span>
<span id="t97" style="left:3509.4px;top:1767.7px;font-size:43.5px;color:#353746;letter-spacing:1.629px;">$8.800,00</span>
<span id="t98" style="left:2745.0px;top:1866.7px;font-size:42px;color:#313446;letter-spacing:0.414px;">Progress</span>
<span id="t99" style="left:2746.3px;top:1964.4px;font-size:42px;color:#313446;letter-spacing:0.347px;">Customer Stage</span>
<div style="left:3309.0px;top:1949.2px;width:406.9px;height:72px;border-radius:36px;background:#fdf3b3"></div>
<svg style="left:3344.5px;top:1965.7px;overflow:visible" width="37.6" height="40.0" viewBox="0 0 62 66" fill="none"><g stroke="#8f5f1e" stroke-width="6.2" stroke-linecap="round" stroke-linejoin="round"><path d="M52.4 12.9 A29.0 29.0 0 1 0 53.4 52.0"/><path d="M25.5 29 V61.5"/><path d="M25.5 41 Q27 33.5 35 33 Q41 33 44.5 35.5"/></g></svg>
<span id="t100" style="left:3399.4px;top:1964.2px;font-size:39px;color:#8a5a1c;letter-spacing:0.487px;">Contract Signed</span>
<span id="t101" style="left:2745.0px;top:2071.9px;font-size:42px;color:#313446;letter-spacing:0.287px;">Following Step</span>
<span id="t102" style="left:3251.9px;top:2043.8px;font-size:42px;color:#3f414e;letter-spacing:0.864px;">Update billing</span>
<span id="t103" style="left:3252.3px;top:2098.5px;font-size:42px;color:#3f414e;letter-spacing:1.197px;">information</span>
<span id="t104" style="left:2745.0px;top:2187.4px;font-size:42px;color:#313446;letter-spacing:1.311px;">Notes</span>
<span id="t105" style="left:3251.7px;top:2158.8px;font-size:42px;color:#3f414e;letter-spacing:0.254px;">Requires customized</span>
<span id="t106" style="left:3252.4px;top:2213.5px;font-size:42px;color:#3f414e;letter-spacing:0.524px;">billing solutions</span>
<span id="t107" style="left:2768.6px;top:2355.5px;font-size:40.5px;color:#3b4053;letter-spacing:1.341px;">Nuvo Relocation</span>
<span id="t108" style="left:2746.3px;top:2461.2px;font-size:42px;color:#313446;letter-spacing:0.415px;">Customer Type</span>
<div style="left:3328.1px;top:2446.0px;width:387.8px;height:72px;border-radius:36px;background:#fbe4ee"></div>
<svg style="left:3359.7px;top:2461.4px;overflow:visible" width="46.5" height="39.9" viewBox="0 0 49 42" fill="none"><g stroke="#b3315f" stroke-width="3.5" stroke-linecap="round" stroke-linejoin="round"><path d="M11 2 V40 M1.5 30.5 L11 40 L20.5 30.5"/><rect x="28.5" y="2" width="12" height="11.5" rx="2.5"/><rect x="28" y="22.5" width="19" height="18.5" rx="3"/></g></svg>
<span id="t109" style="left:3419.8px;top:2461.0px;font-size:39px;color:#ae2a5b;letter-spacing:-0.110px;">Small Business</span>
<span id="t110" style="left:2744.5px;top:2559.0px;font-size:42px;color:#313446;letter-spacing:0.765px;">Industry</span>
<span id="t111" style="left:3482.5px;top:2557.7px;font-size:43.5px;color:#353746;letter-spacing:1.487px;">Technology</span>
<span id="t112" style="left:2746.5px;top:2656.7px;font-size:42px;color:#313446;letter-spacing:0.502px;">Sign-up Date</span>
<span id="t113" style="left:3480.5px;top:2655.5px;font-size:43.5px;color:#353746;letter-spacing:1.998px;">24.04.2023</span>
<span id="t114" style="left:2745.0px;top:2754.5px;font-size:42px;color:#313446;letter-spacing:0.834px;">Last Activity Date</span>
<span id="t115" style="left:3490.6px;top:2753.2px;font-size:43.5px;color:#353746;letter-spacing:0.878px;">18.05.2023</span>
<span id="t116" style="left:2748.3px;top:2852.2px;font-size:42px;color:#313446;letter-spacing:0.106px;">Assigned to</span>
<div style="left:3511.9px;top:2837.0px;width:204.0px;height:72px;border-radius:36px;background:#f2f4f8"></div>
<span id="t117" style="left:3540.7px;top:2852.0px;font-size:39px;color:#3f4760;letter-spacing:0.051px;">Ray Ing</span>
</div></div></body></html>
